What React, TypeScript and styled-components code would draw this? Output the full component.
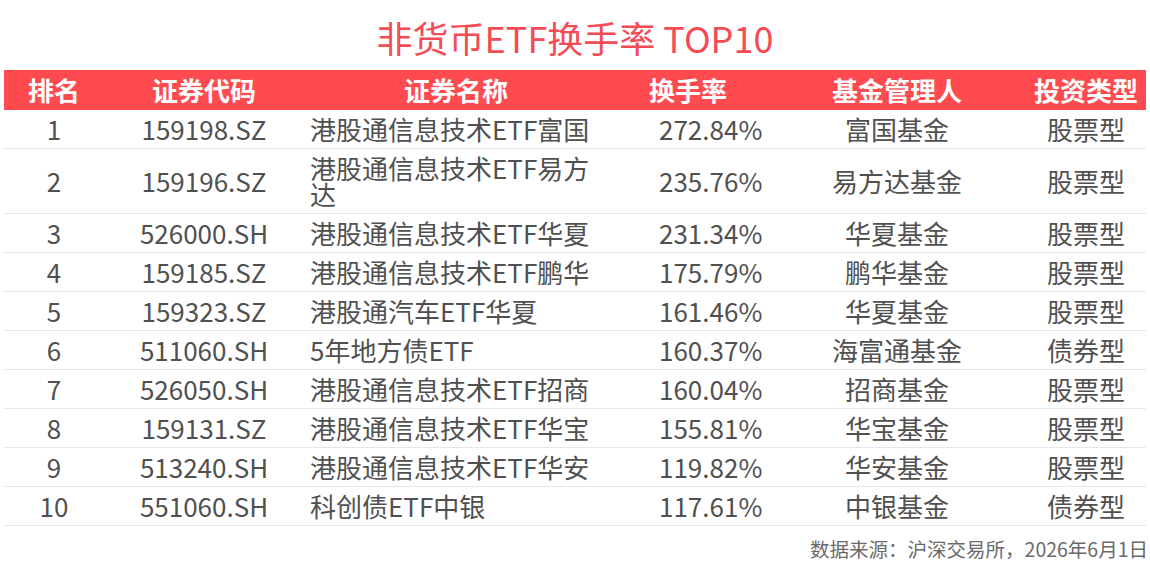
import React from 'react'
import styled, { createGlobalStyle } from 'styled-components'

const GlobalStyle = createGlobalStyle`
  html, body {
    margin: 0;
    padding: 0;
    background: #ffffff;
  }
  body {
    font-family: "Noto Sans CJK SC", "Noto Sans", sans-serif;
  }
`

const Page = styled.div`
  width: 1150px;
  height: 566px;
  padding: 0 4px;
  box-sizing: border-box;
  display: flex;
  flex-direction: column;
`

const Title = styled.h1`
  margin: 0;
  height: 70px;
  display: flex;
  align-items: center;
  justify-content: center;
  font-size: 36px;
  font-weight: 400;
  color: #f44b55;
  padding-top: 4px;
  box-sizing: border-box;
`

const columns = '100px 200px 304px 160px 258px 120px'

const HeaderRow = styled.div`
  display: grid;
  grid-template-columns: ${columns};
  height: 40px;
  background: #ff4b50;
  align-items: center;
`

const HeaderCell = styled.div`
  text-align: center;
  color: #ffffff;
  font-size: 26px;
  font-weight: 700;
  line-height: 40px;
`

const Row = styled.div`
  display: grid;
  grid-template-columns: ${columns};
  align-items: center;
  border-bottom: 1px solid #e6e6ee;
  padding: 6px 0;
`

const Cell = styled.div<{ align?: 'left' | 'center'; indent?: number }>`
  text-align: ${(p) => p.align || 'center'};
  padding-left: ${(p) => p.indent || 0}px;
  padding-right: ${(p) => (p.align === 'left' ? 12 : 0)}px;
  color: #505050;
  font-size: 26px;
  line-height: 26px;
`

const Footer = styled.div`
  text-align: right;
  color: #6a6a6a;
  font-size: 19.5px;
  margin-top: 8px;
  margin-right: -2px;
`

const headers = ['排名', '证券代码', '证券名称', '换手率', '基金管理人', '投资类型']

const rows = [
  ['1', '159198.SZ', '港股通信息技术ETF富国', '272.84%', '富国基金', '股票型'],
  ['2', '159196.SZ', '港股通信息技术ETF易方达', '235.76%', '易方达基金', '股票型'],
  ['3', '526000.SH', '港股通信息技术ETF华夏', '231.34%', '华夏基金', '股票型'],
  ['4', '159185.SZ', '港股通信息技术ETF鹏华', '175.79%', '鹏华基金', '股票型'],
  ['5', '159323.SZ', '港股通汽车ETF华夏', '161.46%', '华夏基金', '股票型'],
  ['6', '511060.SH', '5年地方债ETF', '160.37%', '海富通基金', '债券型'],
  ['7', '526050.SH', '港股通信息技术ETF招商', '160.04%', '招商基金', '股票型'],
  ['8', '159131.SZ', '港股通信息技术ETF华宝', '155.81%', '华宝基金', '股票型'],
  ['9', '513240.SH', '港股通信息技术ETF华安', '119.82%', '华安基金', '股票型'],
  ['10', '551060.SH', '科创债ETF中银', '117.61%', '中银基金', '债券型'],
]

export default function App() {
  return (
    <>
      <GlobalStyle />
      <Page>
        <Title>非货币ETF换手率 TOP10</Title>
        <HeaderRow>
          {headers.map((h) => (
            <HeaderCell key={h}>{h}</HeaderCell>
          ))}
        </HeaderRow>
        {rows.map((r) => (
          <Row key={r[0]}>
            <Cell>{r[0]}</Cell>
            <Cell>{r[1]}</Cell>
            <Cell align="left" indent={6}>{r[2]}</Cell>
            <Cell align="left" indent={51}>{r[3]}</Cell>
            <Cell>{r[4]}</Cell>
            <Cell>{r[5]}</Cell>
          </Row>
        ))}
        <Footer>数据来源：沪深交易所，2026年6月1日</Footer>
      </Page>
    </>
  )
}
